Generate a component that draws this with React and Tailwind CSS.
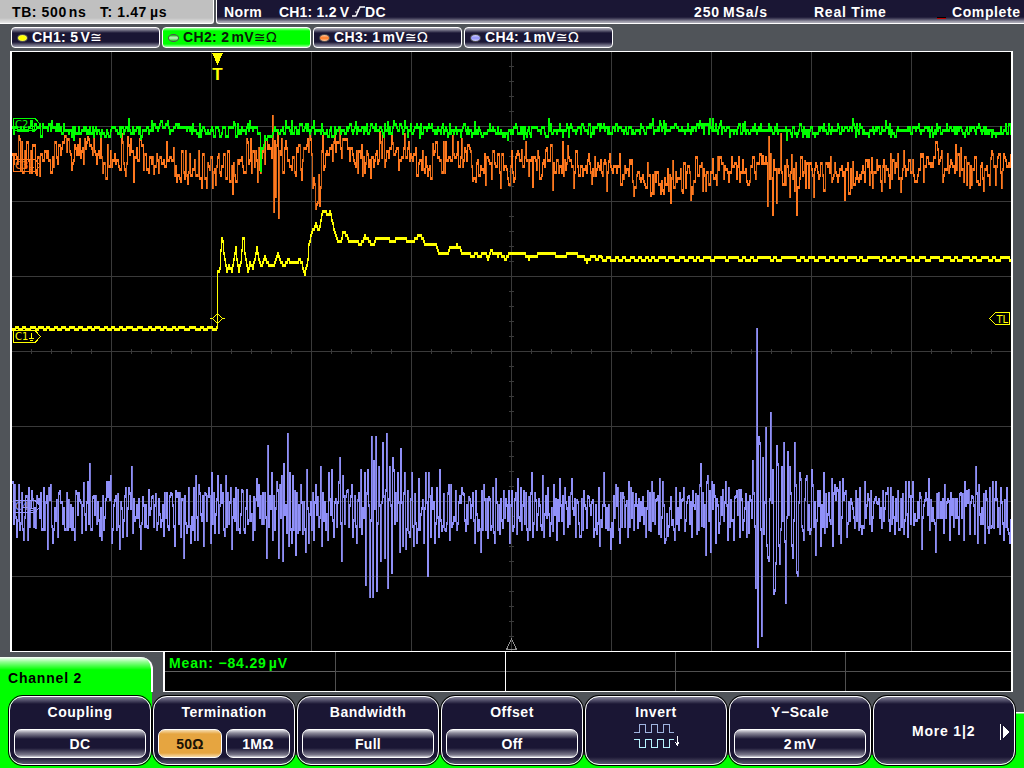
/**
 * Oscilloscope screen
 *
 * Four channel acquisition view: status bar, channel strip, graticule with
 * traces, measurement table and the soft key menu of the selected channel.
 */

import React from 'react';

const FONT = "font-['Liberation_Sans',Arial,sans-serif] font-bold";

/* ---------- trace data (screen coordinates) ---------- */

// Small seeded generator so that the noise is the same on every render
const makeRandom = (seed) => () => {
  seed = (seed * 1664525 + 1013904223) % 4294967296;
  return seed / 4294967296;
};

// Linear interpolation through a list of [x, y] points
const interpolate = (points, x) => {
  for (let i = 1; i < points.length; i++) {
    if (x <= points[i][0]) {
      const [x0, y0] = points[i - 1];
      const [x1, y1] = points[i];
      return y0 + ((y1 - y0) * (x - x0)) / (x1 - x0 || 1);
    }
  }
  return points[points.length - 1][1];
};

const parsePoints = (text) =>
  text.trim().split(/\s+/).map((pair) => pair.split(',').map(Number));

// The ADC resolves steps of three pixels
const quantize = (y) => Math.round(y / 3) * 3;

// One vertical bar for each column, joining it to the column before
const columnsToPath = (values, thickness) => {
  let d = '';
  for (let i = 0; i < values.length; i++) {
    const prev = i > 0 ? values[i - 1] : values[i];
    const top = Math.min(prev, values[i]);
    const bottom = Math.max(prev, values[i]) + thickness;
    d += `M${12 + i + 0.5} ${top}V${bottom}`;
  }
  return d;
};

// Long edges that fall between two columns are drawn darker
const dimEdges = (values, every, minimum) =>
  values
    .map((y, i) => {
      const prev = values[i - 1];
      return i > 0 && i % every === 0 && Math.abs(y - prev) > minimum
        ? `M${12.5 + i} ${Math.min(y, prev)}V${Math.max(y, prev) + 3}`
        : '';
    })
    .join('');

const C1_POINTS = parsePoints(`
  216,327 216.9,290 217,272 219,268 220,250 221,239 222,240 223,254 226,272 228,265 231,270
  233,258 235,247 236,258 238,270 240,262 242,239 243,239 244,252 247,270 249,263
  252,268 256,248 258,260 260,266 264,257 267,263 273,266 277,254 280,262 283,266
  287,260 293,262 299,260 301,263 304,275 307,258 308,245 311,232 315,223 317,230
  319,226 321,213 324,211 327,215 329,212 332,222 334,233 337,241 340,240 342,233
  344,231 347,239 350,242 357,242 359,245 364,236 366,237 369,242 372,245 375,239
  388,239 390,242 395,239 404,239 411,242 415,238 418,234 422,238 425,245 435,245
  437,251 441,254 447,253 449,248 453,248 456,245 459,248 464,254 485,254 487,257
  490,251 500,254 505,257 510,252 525,254 528,257 535,257 538,252 550,252 555,254
  560,257 570,252 580,254 586,260 590,256 600,257 620,257 1011,257
`);

const buildC1 = () => {
  const random = makeRandom(11);
  const values = [];
  let held = 0;
  let low = false;
  for (let x = 12; x < 1011; x++) {
    if (held-- <= 0) {
      low = !low;
      if (x < 217) held = 1 + random() * 3.5;
      else held = low ? 1 + random() * 2.5 : 1 + random() * random() * 14;
    }
    if (x < 217) values.push(low ? 328 : 325.5);
    else if (x > 600) values.push(low ? 259 : 256);
    else if (x > 460) values.push(quantize(interpolate(C1_POINTS, x) - 1 + (low ? 1.4 : 0)));
    else values.push(quantize(interpolate(C1_POINTS, x) - 1));
  }
  return columnsToPath(values, 3);
};

const C2_POINTS = parsePoints(`
  12,127 50,127 70,130 110,131 150,126 175,126 210,130 255,128 259,133 260,169 261,150
  263,140 266,135 270,131 285,128 340,128 400,127 440,129 520,130 560,128 590,127
  700,127 760,128 800,131 820,129 900,128 960,129 990,131 1011,129
`);

const C3_POINTS = parsePoints(`
  12,151 40,156 70,150 88,146 105,160 130,158 160,158 180,163 205,168 230,167 250,158
  270,150 285,157 300,165 306,150 309,138 312,175 316,198 319,185 321,152 340,145
  355,152 370,160 380,148 395,152 410,152 425,164 445,155 460,157 475,168 490,164
  505,170 522,156 540,162 560,160 570,156 590,166 615,170 640,176 660,180 680,178
  700,178 720,168 745,166 760,165 800,172 830,175 860,172 880,167 910,168 935,160
  960,162 975,168 1011,163
`);

// Single excursions on channel 3
const C3_SPIKES = parsePoints(`
  36,173 87,136 121,133 127,136 133,180 153,172 187,182 212,186 232,192 257,180
  272,115 273,210 274,140 275,195 277,130 278,216 279,150 285,140 301,178 309,133
  316,203 334,133 370,176
  379,131 392,142 404,133 432,143 472,179 500,186 508,183 521,149 532,185 545,149
  552,188 567,145 573,186 591,182 608,160 633,194 650,194 660,192 672,160 682,191
  705,189 712,158 762,155 767,204 768,136 772,213 776,201 780,133 789,195 791,154
  796,213 804,160 813,195 844,198 852,161 871,157 881,189 900,190 921,155 937,148
  942,180 971,183 983,189 990,157 1001,186 1010,154
`);

const C2_SPIKES = parsePoints(`
  73,138 128,118 140,137 233,121 355,121 387,121 419,136 474,121 523,137 548,118
  652,118 709,118 712,118 744,121 852,118 260,169
`);

const buildNoise = (points, spread, seed, spikes, hold) => {
  const random = makeRandom(seed);
  const values = [];
  let held = 0;
  let y = 0;
  for (let x = 12; x < 1011; x++) {
    if (held-- <= 0) {
      y = (random() + random() - 1) * spread;
      held = random() < hold ? 1 : 0;
    }
    values.push(quantize(interpolate(points, x) + y));
  }
  spikes.forEach(([x, value]) => {
    values[x - 12] = value;
  });
  return values;
};

// Peaks of channel 4
const C4_PEAKS = parsePoints(`
  13,481 15,484 17,535 19,484 20,528 24,538 28,538 29,487 32,490 36,526 42,528 44,487
  48,547 49,487 51,484 53,541 57,499 58,535 60,535 60,490 69,499 72,528 75,538 76,490
  80,499 82,531 84,482 88,481 90,463 92,528 93,496 100,534 102,538 107,481 109,481
  111,475 112,541 115,499 117,528 118,493 120,547 123,535 126,487 127,534 129,487
  132,466 133,531 141,547 143,496 148,526 152,496 157,528 156,493 164,534 172,493
  175,544 176,490 181,535 184,556 187,531 189,487 191,541 194,487 195,538 196,475
  198,538 199,484 204,544 206,493 209,487 211,541 212,472 218,475 219,531 221,484
  225,534 226,475 232,547 231,487 236,487 240,531 243,490 253,538 254,496 257,478
  259,484 267,556 268,445 272,472 273,538 277,481 279,556 280,484 283,559 282,475
  284,463 288,433 289,544 290,472 293,475 292,541 295,490 296,553 301,484 303,532
  306,550 307,469 309,541 314,538 316,484 321,466 322,544 318,496 328,538 329,472
  332,469 334,535 339,481
  340,457 342,559 343,475 347,490 352,484 353,535 357,541 358,499 361,469 362,532
  365,472 366,583 368,469 370,595 372,436 373,595 374,460 376,436 377,589 379,466
  381,559 383,442 385,556 387,433 388,586 390,466 392,571 393,457 394,469 398,472
  400,550 401,448 403,544 405,472 406,547 408,490 410,535 414,544 412,472 415,493
  417,541 419,478 423,499 424,541 426,472 428,574 429,472 431,535 432,487 435,541
  437,487 439,535 440,469 442,529 444,493 446,529 449,484 450,538 451,484 457,528
  456,490 462,487 464,493 466,529 469,496 475,541 476,490 478,529 481,550 482,490
  484,484 488,536 489,496 493,487 495,541 496,478 500,532 504,490 503,526 509,490
  510,541 513,529 512,490 518,478 517,532 521,487 524,490 528,538 529,496 532,472
  533,535 536,499 541,524 543,475 544,535 548,487 550,534 554,484 553,529 557,538
  558,499 560,478 564,532 565,487 569,496 572,478 576,535 577,499 580,535 581,535
  584,490 587,526 589,496 594,535 593,499 597,532 599,487 600,544 604,472 606,526
  611,547 613,535 616,484 618,487 620,541 624,496 627,500 628,535 629,481 631,487
  636,493 638,526 643,496 646,535 648,490 651,529 652,481 656,499 659,532 660,478
  661,535 663,481 665,541 666,538 668,534 671,496 672,523 675,538 676,487
  682,499 684,487 685,529 688,496 692,535 693,490 696,493 697,532 700,484 701,463
  702,524 706,553 707,481 708,475 710,490 711,550 712,481 714,484 716,541 721,496
  726,481 728,538 729,487 731,499 734,538 735,496 737,490 740,535 746,493 747,535
  751,499 753,460 756,586 757,328 758,645 759,436 760,442 762,634 763,457
  764,532 766,427 767,544 768,556 769,559 771,412 773,469 774,592 775,589 776,562
  777,445 778,463 780,562 779,544 782,466 784,442 786,601 785,540 788,451 790,466
  792,544 793,556 795,442 796,484 797,571 798,574 800,472 801,478 803,529 804,538
  807,475 806,478 810,532 812,469 813,484 816,553 818,490 821,544 820,490 824,472
  826,493 832,478 833,544 835,484 837,487 839,532 841,541 840,481 843,478 846,490
  847,535 852,502 855,526 856,490 860,487 862,532 865,481 864,526 868,493 871,490
  872,529 876,496 878,502 883,490 882,526 888,487 890,529 891,487 893,496 895,532
  898,490 899,528 903,493 904,532 906,481 908,535 909,481 913,481 914,523 921,496
  922,547 925,499 929,478 931,499 936,550 937,493 945,484 950,538 949,500 959,532
  960,493 963,493 965,481 964,538 967,490 970,532 973,496 975,532 976,466 978,541
  979,484 985,541 984,493 986,490 988,526 990,487 991,526 993,481 994,526 996,481
  1000,532 1001,487 1004,538 1005,499 1007,487 1009,532 1010,541
`);

const buildC4 = () => {
  const random = makeRandom(77);
  const values = [];
  let side = 1;
  for (let x = 12; x < 1011; x++) {
    // The noise mostly swings across the mid line from sample to sample
    if (random() < 0.75) side = -side;
    values.push(quantize(510 + side * (2 + random() * 18)));
  }
  C4_PEAKS.forEach(([x, y]) => {
    values[x - 13] = y;
  });
  return values;
};

const C1_PATH = buildC1();
const C2_PATH = columnsToPath(buildNoise(C2_POINTS, 8, 5, C2_SPIKES, 0.15), 3);
const C3_VALUES = buildNoise(C3_POINTS, 22, 29, C3_SPIKES, 0.3);
const C4_VALUES = buildC4();

/* ---------- graticule ---------- */

const GRID_X = [111, 211, 311, 411, 511, 611, 711, 811, 911];
const GRID_Y = [126, 201, 276, 351, 426, 501, 576];
const TICKS_X = Array.from({ length: 49 }, (_, i) => 31 + i * 20);
const TICKS_Y = Array.from({ length: 39 }, (_, i) => 66 + i * 15);

const Graticule = () => (
  <g stroke="#3a3a3a" fill="none">
    {GRID_X.map((x) => <path key={x} d={`M${x + 0.5} 52V651`} />)}
    {GRID_Y.map((y) => <path key={y} d={`M12 ${y + 0.5}H1011`} />)}
    <path d={TICKS_X.map((x) => `M${x + 0.5} 349V354`).join('')} />
    <path d={TICKS_Y.map((y) => `M509 ${y + 0.5}H514`).join('')} />
  </g>
);

// Ground reference flag of a channel, at the left edge
const ChannelTag = ({ y, label, color }) => (
  <g stroke={color} fill="none">
    <path d={`M13.5 ${y + 0.5}H35L40.5 ${y + 6.5}L35 ${y + 12.5}H13.5Z`} />
    <text x="15" y={y + 10} fill={color} stroke="none" fontSize="10" fontFamily="DejaVu Sans, sans-serif">
      {label}
    </text>
    <path d={`M31.5 ${y + 3}V${y + 8}M29 ${y + 8.5}H34M30 ${y + 10.5}H33`} />
  </g>
);

const Plot = () => (
  <main className="ml-[10px] h-[601px] w-[1003px] shrink-0 border-x-2 border-y border-white bg-black">
    <svg className="block" width="999" height="599" viewBox="12 52 999 599" shapeRendering="crispEdges">
      <Graticule />
      <path d={columnsToPath(C4_VALUES, 3)} stroke="#9090f8" />
      <path d={dimEdges(C4_VALUES, 3, 21)} stroke="#7878d0" />
      <path d={columnsToPath(C3_VALUES, 3)} stroke="#ff781e" />
      <path d={dimEdges(C3_VALUES, 3, 9)} stroke="#c86018" />
      <path d={C1_PATH} stroke="#ffff00" />
      <path d={C2_PATH} stroke="#00ff00" />

      <ChannelTag y={118} label="C2" color="#00ff00" />
      <ChannelTag y={159} label="C3" color="#ff781e" />
      <ChannelTag y={330} label="C1" color="#ffff00" />
      <ChannelTag y={500} label="C4" color="#9494fc" />

      {/* Trigger position */}
      <path d="M212 53H223L217.5 65Z" fill="#ffff00" />
      <text x="217.5" y="80" textAnchor="middle" fill="#ffff00" fontSize="17" fontWeight="700" fontFamily="Liberation Sans, sans-serif">T</text>

      {/* Trigger crossing */}
      <path d="M210 318.5H213M222 318.5H225M217.5 313.5L222.5 318.5L217.5 323.5L212.5 318.5Z" fill="none" stroke="#ffff00" />

      {/* Trigger level flag */}
      <path d="M1009.5 312.5H995.5L989.5 318.5L995.5 324.5H1009.5Z" fill="#000" stroke="#ffff00" />
      <text x="996.5" y="322.5" fill="#ffff00" fontSize="10" fontFamily="DejaVu Sans, sans-serif">TL</text>

      {/* Reference point */}
      <path d="M511.5 639L506.5 649.5H516.5Z" fill="none" stroke="#909090" />
    </svg>
  </main>
);

/* ---------- status bar and channel strip ---------- */

const Header = () => (
  <header className={`flex h-6 shrink-0 gap-[2px] text-[14px] leading-6 whitespace-pre ${FONT}`}>
    <div className="flex w-[214px] rounded-br-[3px] border-r border-b border-white bg-[linear-gradient(#c0c0c0_18px,#e8e8e8_23px)] pl-3 text-black">
      <span className="w-[88px] tracking-[0.6px]">TB: 500<span className="ml-[2px]">ns</span></span>
      <span className="tracking-[0.6px]">T: 1.47<span className="ml-[3px]">µs</span></span>
    </div>
    <div className="flex flex-1 rounded-bl-[3px] border-b border-l border-white bg-[linear-gradient(#1a1634_17px,#4a4760_19px,#a9a8b4_22px)] pl-[7px] text-white">
      <span className="w-[55px] tracking-[0.4px]">Norm</span>
      <span className="w-[73px] tracking-[0.2px]">CH1: 1.2<span className="ml-[3px]">V</span></span>
      <svg className="mt-[6px]" width="13" height="11" viewBox="0 0 13 11" fill="none" stroke="#fff" strokeWidth="1.5">
        <path d="M0 10H4L8 1H13" />
        <path d="M3 6H6L6 3" strokeWidth="1" />
      </svg>
      <span className="w-[329px] tracking-[0.3px]">DC</span>
      <span className="w-[120px] tracking-[0.9px]">250<span className="ml-[3px]">MSa/s</span></span>
      <span className="w-[123px] tracking-[0.75px]">Real Time</span>
      <span className="mt-[17px] h-[2px] w-[9px] border-b border-[#c00000] bg-black" />
      <span className="ml-[6px] tracking-[0.6px]">Complete</span>
    </div>
  </header>
);

const CHANNELS = [
  { name: 'CH1: 5', unit: 'V', coupling: '≅', dot: 'bg-[radial-gradient(#ffff00_40%,#f4f4a0)]', on: false },
  { name: 'CH2: 2', unit: 'mV', coupling: '≅Ω', dot: 'bg-[linear-gradient(#00c000,#a0f0a0_35%,#c0f0c0_50%,#20c820)]', on: true },
  { name: 'CH3: 1', unit: 'mV', coupling: '≅Ω', dot: 'bg-[linear-gradient(#ffc8a0,#ff7820_50%,#ffc8a0)]', on: false },
  { name: 'CH4: 1', unit: 'mV', coupling: '≅Ω', dot: 'bg-[linear-gradient(#d0d0ff,#9090f8_50%,#d0d0ff)]', on: false },
];

const ChannelStrip = () => (
  <nav className={`flex h-[27px] shrink-0 gap-[2px] pt-[3px] pl-[11px] text-[14px] ${FONT}`}>
    {CHANNELS.map((channel) => (
      <div
        key={channel.name}
        className={`flex h-[21px] w-[149px] items-center rounded-[4px] border border-white pl-[5px] tracking-[0.35px] whitespace-pre ${
          channel.on
            ? 'bg-[linear-gradient(#a0ffa0,#00ff00_3px,#00ff00_16px,#a0ffa0)] text-[#0a1a0a]'
            : 'bg-[linear-gradient(#b4b3c0,#1a1634_5px,#1a1634_14px,#a0a0b0)] text-white'
        }`}
      >
        <span className={`mr-[4px] h-[8px] w-[11px] rounded-[50%] border border-[#505050] ${channel.dot}`} />
        <span>{channel.name}</span>
        <span className="ml-[2px]">{channel.unit}</span>
        <span className="font-['DejaVu_Sans',sans-serif] text-[14px] font-normal">{channel.coupling}</span>
      </div>
    ))}
  </nav>
);

/* ---------- measurement table ---------- */

const Measurements = () => (
  <section className="flex h-10 w-[850px] border-r-2 border-b border-l-2 border-white bg-black">
    <div className="flex w-[171px] flex-col border-r border-[#505050]">
      <div className={`h-5 border-b border-[#606060] pl-1 text-[14px] leading-[22px] tracking-[0.85px] whitespace-pre text-[#00ff00] ${FONT}`}>
        Mean: −84.29<span className="ml-[2px]">µV</span>
      </div>
    </div>
    <div className="w-[170px] border-r border-white"><div className="h-5 border-b border-[#505050]" /></div>
    <div className="w-[170px] border-r border-[#505050]"><div className="h-5 border-b border-[#505050]" /></div>
    <div className="w-[170px] border-r border-[#505050]"><div className="h-5 border-b border-[#505050]" /></div>
    <div className="flex-1"><div className="h-5 border-b border-[#505050]" /></div>
  </section>
);

/* ---------- soft keys ---------- */

const Value = ({ children, active = false }) => (
  <div
    className={`flex h-[29px] flex-1 items-center justify-center rounded-[7px] border border-white pt-[1px] tracking-[0.3px] whitespace-pre ${
      active
        ? 'bg-[linear-gradient(#f6dcae,#e6a540_4px,#e6a540_23px,#f6dcae)] text-[#1a1205]'
        : 'bg-[linear-gradient(#e0e0e6,#8c8a9a_3px,#1a1634_9px,#1a1634_18px,#7c7a8c_25px,#d0d0d8)]'
    }`}
  >
    {children}
  </div>
);

const SoftKey = ({ title, children }) => (
  <div className="m-px h-[69px] w-[142px] rounded-[14px] border border-white bg-[linear-gradient(#85839a,#1a1634_7px,#1a1634_60px,#5c5a70)] px-[4px] ring-1 ring-black">
    {title && <div className="h-[32px] pt-[5px] text-center leading-[20px] tracking-[0.55px]">{title}</div>}
    {children}
  </div>
);

// The keys stand on the grey panel; the selected channel's colour shows below
const Slot = ({ children }) => (
  <div className="w-[144px] bg-[linear-gradient(#505459_63px,#00ff00_63px)] pt-[3px]">{children}</div>
);

const InvertIcon = () => (
  <svg className="mx-auto -mt-[6px] block" width="46" height="28" viewBox="0 0 46 28" fill="none" shapeRendering="crispEdges">
    <path d="M1 9.5H6.5V1.5H12.5V9.5H18.5V1.5H24.5V9.5H30.5V1.5H36.5V9.5H41" stroke="#a0b4e0" />
    <path d="M1 16.5H6.5V24.5H12.5V16.5H18.5V24.5H24.5V16.5H30.5V24.5H36.5V16.5H41" stroke="#b8f4ff" />
    <path d="M44.5 13V22M42.5 19.5L44.5 22L46 19.5" stroke="#fff" />
  </svg>
);

const SoftKeys = () => (
  <footer className={`flex h-[76px] text-[14px] text-white ${FONT}`}>
    <div className="w-[152px] bg-[#00ff00] pt-[3px] pl-2">
      <SoftKey title="Coupling"><div className="flex"><Value>DC</Value></div></SoftKey>
    </div>
    <Slot>
      <SoftKey title="Termination">
        <div className="flex gap-1">
          <Value active>50Ω</Value>
          <Value>1MΩ</Value>
        </div>
      </SoftKey>
    </Slot>
    <Slot><SoftKey title="Bandwidth"><div className="flex"><Value>Full</Value></div></SoftKey></Slot>
    <Slot><SoftKey title="Offset"><div className="flex"><Value>Off</Value></div></SoftKey></Slot>
    <Slot><SoftKey title="Invert"><InvertIcon /></SoftKey></Slot>
    <Slot><SoftKey title="Y−Scale"><div className="flex"><Value>2<span className="ml-[2px]">mV</span></Value></div></SoftKey></Slot>
    <Slot>
      <SoftKey>
        <div className="flex h-full items-center pt-[2px] pl-[34px] tracking-[0.8px]">
          <span className="w-[88px] whitespace-pre">More 1|2</span>
          <svg width="10" height="16" viewBox="0 0 10 16" fill="#fff" shapeRendering="crispEdges">
            <path d="M0 0H1V16H0ZM3 2L9 8L3 14Z" />
          </svg>
        </div>
      </SoftKey>
    </Slot>
    <div className="w-2 bg-[linear-gradient(#505459_20px,#ffffff_20px,#ffffff_21px,#00ff00_22px)]" />
  </footer>
);

export default function App() {
  return (
    <div className="flex h-[768px] w-[1024px] flex-col overflow-hidden bg-[#505459]">
      <Header />
      <ChannelStrip />
      <Plot />
      <div className="flex h-10 shrink-0 gap-[10px]">
        <div className={`mt-[5px] w-[153px] rounded-tr-[12px] border-r-2 border-white bg-[linear-gradient(#ffffff,#90ff90_5px,#00ff00_13px)] pt-[10px] pl-[8px] text-[14px] leading-[22px] tracking-[0.8px] text-black ${FONT}`}>
          Channel 2
        </div>
        <Measurements />
      </div>
      <SoftKeys />
    </div>
  );
}
